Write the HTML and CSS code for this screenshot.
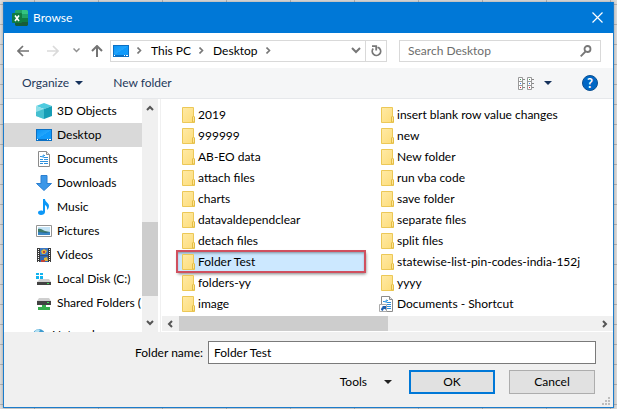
FILE: index.html
```
<!DOCTYPE html>
<html lang="en">
<head>
  <meta charset="UTF-8" />
  <meta name="viewport" content="width=device-width, initial-scale=1.0"/>
  <title>Browse</title>
  <link rel="stylesheet" href="styles.css">
</head>
<body>

  <!-- shared icons -->
  <svg class="defs" aria-hidden="true">
    <linearGradient id="yellow" x2="1" y2="1"><stop stop-color="#ffeaa6"/><stop offset="1" stop-color="#fddc78"/></linearGradient>
    <linearGradient id="sky" x2="1" y2="1"><stop stop-color="#0a93f5"/><stop offset=".5" stop-color="#22a5fc"/><stop offset=".52" stop-color="#109afb"/><stop offset="1" stop-color="#139bfa"/></linearGradient>
    <symbol id="folder" viewBox="0 0 13 16">
      <path d="M.5.5h11v9l1 1v5H.5z" fill="url(#yellow)" stroke="#ecc857"/>
      <path d="M10.500 15v-5l1-1 1 1v5z" fill="#ffe596" stroke="#e3bd45"/>
    </symbol>
    <symbol id="monitor" viewBox="0 0 16 12">
      <path d="M0 0h16v12H0z" fill="#0b70c4"/>
      <path d="M1 1h14v9H1z" fill="url(#sky)"/>
      <path d="M1 10h1v1H1zM11 10h1v1h-1zM13 10h2v1h-2z" fill="#fff"/>
    </symbol>
    <symbol id="doc" viewBox="0 0 12 16">
      <path d="M.5.5h8l3 3v12H.5z" fill="#fff" stroke="#8b8b8b"/>
      <path d="M8.500.5v3h3" fill="#e4e4e4" stroke="#8b8b8b"/>
      <path d="M2 5.500h2M5 4.500h2M6 6.500h4M2 8.500h3M6 8.500h4M2 10.500h8M2 12.500h3M6 12.500h4" stroke="#2d8fdc"/>
      <path d="M3 6l3-3v4z" fill="#57aeea"/>
    </symbol>
  </svg>

  <div class="dialog">
    <header class="titlebar">
      <svg width="16" height="16" viewBox="0 0 16 16">
        <path d="M4 0h6v5H3V1z" fill="#21a366"/><path d="M10 0h5l1 1v4h-6z" fill="#33c481"/>
        <path d="M3 4h7v4H3z" fill="#107c41"/><path d="M10 4h6v4h-6z" fill="#21a366"/>
        <path d="M3 8h7v4H3z" fill="#185c37"/><path d="M10 8h6v4h-6z" fill="#107c41"/>
        <path d="M3 12h13v3l-1 1H4l-1-1z" fill="#185c37"/>
        <rect y="3" width="10" height="10" rx="1" fill="#107c41"/>
        <path d="M3 5.500l4 5.500M7 5.500L3 11" stroke="#fff" stroke-width="1.600"/>
      </svg>
      <h1>Browse</h1>
      <button class="close" aria-label="Close">
        <svg width="11" height="11" viewBox="0 0 11 11"><path d="M.5.5l10 10M10.500.5l-10 10" stroke="#fff" stroke-width="1.200"/></svg>
      </button>
    </header>

    <nav class="navbar">
      <button aria-label="Back"><svg width="12" height="12" viewBox="0 0 12 12"><path d="M12 6H1M6 1L1 6l5 5" fill="none" stroke="#747474" stroke-width="1.700"/></svg></button>
      <button class="forward" aria-label="Forward" disabled><svg width="12" height="12" viewBox="0 0 12 12"><path d="M0 6h11M6 1l5 5-5 5" fill="none" stroke="#dadada" stroke-width="1.700"/></svg></button>
      <button class="recent" aria-label="Recent locations"><svg width="7" height="5" viewBox="0 0 7 5"><path d="M.5.5l3 3 3-3" fill="none" stroke="#909090" stroke-width="1.500"/></svg></button>
      <button class="up" aria-label="Up"><svg width="12" height="12" viewBox="0 0 12 12"><path d="M6 12V1M1 6l5-5 5 5" fill="none" stroke="#747474" stroke-width="2"/></svg></button>

      <div class="address">
        <svg width="16" height="12"><use href="#monitor"/></svg>
        <svg class="sep" width="5" height="7" viewBox="0 0 5 7"><path d="M.5.5l3 3-3 3" fill="none" stroke="#777" stroke-width="1.600"/></svg>
        <a href="#">This PC</a>
        <svg class="sep" width="5" height="7" viewBox="0 0 5 7"><path d="M.5.5l3 3-3 3" fill="none" stroke="#777" stroke-width="1.600"/></svg>
        <a href="#">Desktop</a>
        <svg class="sep" width="5" height="7" viewBox="0 0 5 7"><path d="M.5.5l3 3-3 3" fill="none" stroke="#777" stroke-width="1.600"/></svg>
        <button class="history" aria-label="Previous locations"><svg width="10" height="7" viewBox="0 0 10 7"><path d="M1 1l4 4 4-4" fill="none" stroke="#777" stroke-width="2"/></svg></button>
        <button class="refresh" aria-label="Refresh"><svg width="11" height="12" viewBox="0 0 11 12"><path d="M2.200 3.500A4.200 4.200 0 1 0 8.500 3.300L6.500 2.200" fill="none" stroke="#777" stroke-width="1.800"/><path d="M1 1.200h4.200V5.500" fill="none" stroke="#777" stroke-width="1.800"/></svg></button>
      </div>

      <div class="search">
        <input type="text" placeholder="Search Desktop" aria-label="Search Desktop">
        <svg width="12" height="12" viewBox="0 0 12 12"><circle cx="7.500" cy="4" r="3" fill="none" stroke="#777" stroke-width="1.800"/><path d="M5.500 6.500L.7 11.300" stroke="#777" stroke-width="1.800"/></svg>
      </div>
    </nav>

    <div class="toolbar">
      <button class="organize">Organize <svg width="8" height="4" viewBox="0 0 8 4"><path d="M0 0h8L4 4z" fill="#16325c"/></svg></button>
      <button>New folder</button>
      <button class="view" aria-label="Change your view">
        <svg width="16" height="13" viewBox="0 0 16 13">
          <path d="M.5.5h4v12h-4zM9.500.5h4v12h-4zM.5 4.500h4M.5 8.500h4M9.500 4.500h4M9.500 8.500h4" fill="#fff" stroke="#999"/>
          <path d="M5 2.500h2M5 6.500h2M5 10.500h2M14 2.500h2M14 6.500h2M14 10.500h2" stroke="#888"/>
          <path d="M2 2h1v1H2zM11 2h1v1h-1z" fill="#4a9a62"/><path d="M2 6h1v1H2zM11 6h1v1h-1z" fill="#3d7df0"/><path d="M2 10h1v1H2zM11 10h1v1h-1z" fill="#e0203c"/>
        </svg>
        <svg width="8" height="4" viewBox="0 0 8 4"><path d="M0 0h8L4 4z" fill="#16325c"/></svg>
      </button>
      <button class="help" aria-label="Help">?</button>
    </div>

    <main class="panes">
      <div class="places">
        <ul>
          <li><a href="#"><svg width="16" height="16" viewBox="0 0 16 16"><path d="M8 0l8 3-8 3-8-3z" fill="#4fcbdf"/><path d="M0 3l8 3v10l-8-3z" fill="#8fe0e9"/><path d="M16 3L8 6v10l8-3z" fill="#169db5"/><path d="M0 9l8-3v10l-8-3z" fill="#45bfd0"/></svg>3D Objects</a></li>
          <li class="current"><a href="#"><svg width="16" height="12"><use href="#monitor"/></svg>Desktop</a></li>
          <li><a href="#"><svg width="16" height="16"><use href="#doc" x="0" width="16" height="16"/></svg>Documents</a></li>
          <li><a href="#"><svg width="16" height="16" viewBox="0 0 16 16"><path d="M5 .5h6v8h4.500L8 15.500.5 8.500H5z" fill="#3b97e8" stroke="#2b7fd0"/></svg>Downloads</a></li>
          <li><a href="#"><svg width="16" height="16" viewBox="0 0 16 16"><path d="M7 0h2c0 3 4 4 4 7 0 2-1 3-2 4 .5-3-.5-4-2-5v7c0 2-2 3-4 3s-3-1-3-2.200C2 12 4.500 11 7 12z" fill="#0d98f7"/></svg>Music</a></li>
          <li><a href="#"><svg width="16" height="12" viewBox="0 0 16 12"><path d="M.5.5h15v11H.5z" fill="#fff" stroke="#949494"/><path d="M2 2h12v8H2z" fill="#c4e3f6"/><path d="M2 4c3-1 4 1 7 2l5 1v1H2z" fill="#3e7a69"/><path d="M2 7h12v3H2z" fill="#3a86c4"/><path d="M2 7h8l4 1z" fill="#245a58"/></svg>Pictures</a></li>
          <li><a href="#"><svg width="16" height="16" viewBox="0 0 16 16"><path d="M1 1h14v14H1z" fill="#3a3a3a"/><path d="M4 1h8v7H4z" fill="#3c78c4"/><path d="M4 8.500h8V15H4z" fill="#2f6ab5"/><path d="M5 4l3-2 3 2-2 3H6zM8 11l3-1 1 4H8z" fill="#e0b43a"/><path d="M7 4h2v2H7zM5 13h4v2H5z" fill="#c0433a"/><path d="M2.500 2v13M13.500 2v13" stroke="#fff" stroke-dasharray="1 1"/></svg>Videos</a></li>
          <li><a href="#"><svg width="16" height="16" viewBox="0 0 16 16"><path d="M0 2h3v2H0zM4 2h3v2H4zM0 5h3v3H0zM4 5h3v3H4z" fill="#12b4ef"/><path d="M4 8h9l2 3H1z" fill="#cfcfcf"/><path d="M1 11h14v3H1z" fill="#434343"/><path d="M11 12h2v1h-2z" fill="#3fe05a"/></svg>Local Disk (C:)</a></li>
          <li><a href="#"><svg width="16" height="16" viewBox="0 0 16 16"><path d="M3 3h10l2 3H1z" fill="#cfcfcf"/><path d="M1 6h14v4H1z" fill="#434343"/><path d="M11 7h2v1h-2z" fill="#3fe05a"/><path d="M6 10h4v2h4v3H2v-3h4z" fill="#35ae4c"/></svg>Shared Folders (</a></li>
          <li class="root"><a href="#"><svg width="16" height="16" viewBox="0 0 16 16"><circle cx="8" cy="8" r="6" fill="#3d9bcf"/><path d="M4 4c2-2 4-2 5-1L7 7 3 8z" fill="#b3e0f2"/><path d="M1 9h9v6H1z" fill="#2b7cb8"/></svg>Network</a></li>
        </ul>
        <div class="vscroll">
          <svg width="8" height="6" viewBox="0 0 8 6"><path d="M1 5l3-3 3 3" fill="none" stroke="#555" stroke-width="2"/></svg>
          <div class="thumb"></div>
          <svg width="8" height="6" viewBox="0 0 8 6"><path d="M1 1l3 3 3-3" fill="none" stroke="#555" stroke-width="2"/></svg>
        </div>
      </div>

      <div class="files">
        <ul>
          <li><svg width="13" height="16"><use href="#folder"/></svg>2019</li>
          <li><svg width="13" height="16"><use href="#folder"/></svg>999999</li>
          <li><svg width="13" height="16"><use href="#folder"/></svg>AB-EO data</li>
          <li><svg width="13" height="16"><use href="#folder"/></svg>attach files</li>
          <li><svg width="13" height="16"><use href="#folder"/></svg>charts</li>
          <li><svg width="13" height="16"><use href="#folder"/></svg>datavaldependclear</li>
          <li><svg width="13" height="16"><use href="#folder"/></svg>detach files</li>
          <li class="selected"><svg width="13" height="16"><use href="#folder"/></svg>Folder Test</li>
          <li><svg width="13" height="16"><use href="#folder"/></svg>folders-yy</li>
          <li><svg width="13" height="16"><use href="#folder"/></svg>image</li>
          <li><svg width="13" height="16"><use href="#folder"/></svg>insert blank row value changes</li>
          <li><svg width="13" height="16"><use href="#folder"/></svg>new</li>
          <li><svg width="13" height="16"><use href="#folder"/></svg>New folder</li>
          <li><svg width="13" height="16"><use href="#folder"/></svg>run vba code</li>
          <li><svg width="13" height="16"><use href="#folder"/></svg>save folder</li>
          <li><svg width="13" height="16"><use href="#folder"/></svg>separate files</li>
          <li><svg width="13" height="16"><use href="#folder"/></svg>split files</li>
          <li><svg width="13" height="16"><use href="#folder"/></svg>statewise-list-pin-codes-india-152j</li>
          <li><svg width="13" height="16"><use href="#folder"/></svg>yyyy</li>
          <li><svg class="shortcut" width="13" height="16" viewBox="0 0 13 16"><use href="#doc" width="12" height="16"/><path d="M-1.500 8.500h7v7h-7z" fill="#fff" stroke="#aaa"/><path d="M0 14c0-2 1-3 2-3l-1-1h4v4l-1-1c-1 0-2 0-2 2z" fill="#1d5fae"/></svg>Documents - Shortcut</li>
        </ul>
        <div class="hscroll">
          <svg width="6" height="8" viewBox="0 0 6 8"><path d="M5 1L2 4l3 3" fill="none" stroke="#555" stroke-width="2"/></svg>
          <div class="thumb"></div>
          <svg width="6" height="8" viewBox="0 0 6 8"><path d="M1 1l3 3-3 3" fill="none" stroke="#555" stroke-width="2"/></svg>
        </div>
      </div>
    </main>

    <footer class="footer">
      <div class="name-row">
        <label for="folderName">Folder name:</label>
        <input type="text" id="folderName" value="Folder Test">
      </div>
      <div class="actions">
        <button class="tools">Tools <svg width="8" height="4" viewBox="0 0 8 4"><path d="M0 0h8L4 4z" fill="#222"/></svg></button>
        <button class="btn primary">OK</button>
        <button class="btn">Cancel</button>
      </div>
      <svg class="grip" width="8" height="8" viewBox="0 0 8 8"><path d="M6 0h2v2H6zM3 3h2v2H3zM6 3h2v2H6zM0 6h2v2H0zM3 6h2v2H3zM6 6h2v2H6z" fill="#bdbdbd"/></svg>
    </footer>
  </div>

</body>
</html>
```
FILE: styles.css
```
* {
  box-sizing: border-box;
}

body {
  margin: 0;
  padding: 2px 3px 1px;
  min-height: 100vh;
  display: flex;
  font-family: Lato, 'Open Sans', sans-serif;
  font-size: 12px;
  line-height: 16px;
  color: #000;
  /* worksheet grid behind the dialog */
  background-color: #dcdcdc;
  background-image:
    linear-gradient(#b4b4b4 1px, transparent 1px),
    linear-gradient(90deg, #b4b4b4 1px, transparent 1px);
  background-size: 64px 20px;
  background-position: 34px 4px;
}

ul {
  list-style: none;
  margin: 0;
  padding: 0;
}

a {
  color: inherit;
  text-decoration: none;
}

svg {
  flex: none;
}

button, input {
  font: inherit;
  color: inherit;
}

button {
  display: flex;
  align-items: center;
  padding: 0;
  border: none;
  background: none;
}

.defs {
  position: absolute;
  width: 0;
  height: 0;
}

.dialog {
  flex: 1;
  min-width: 0;
  display: flex;
  flex-direction: column;
  border: 1px solid #1c7ccb;
  border-top: none;
  background: #f0f0f0;
  box-shadow: 0 0 3px rgba(0, 0, 0, 0.3);
}

/* title bar */
.titlebar {
  display: flex;
  align-items: center;
  gap: 5px;
  height: 31px;
  padding: 0 10px 0 8px;
  background: #0078d7;
  color: #fff;
}

.titlebar h1 {
  margin: 0;
  font-size: 12px;
  font-weight: normal;
}

.close {
  margin-left: auto;
}

/* navigation */
.navbar {
  display: flex;
  align-items: center;
  height: 35px;
  padding: 0 12px 0 13px;
  background: #fff;
}

.forward {
  margin-left: 18px;
}

.recent {
  margin-left: 14px;
}

.up {
  margin: 0 7px 0 11px;
}

.address {
  flex: 1;
  display: flex;
  align-items: center;
  height: 22px;
  padding-left: 2px;
  border: 1px solid #d9d9d9;
}

.sep {
  margin: 0 9px 0 8px;
}

.history {
  margin-left: auto;
  padding: 0 4px;
}

.refresh {
  align-self: stretch;
  padding: 0 4px 0 5px;
  border-left: 1px solid #d9d9d9;
}

.search {
  display: flex;
  align-items: center;
  width: 202px;
  height: 22px;
  margin-left: 12px;
  padding: 0 8px;
  border: 1px solid #d9d9d9;
}

.search input {
  flex: 1;
  min-width: 0;
  padding: 0;
  border: none;
  outline: none;
  background: none;
}

.search input::placeholder {
  color: #6d6d6d;
}

/* command bar */
.toolbar {
  display: flex;
  align-items: center;
  gap: 30px;
  height: 31px;
  padding: 0 15px 0 18px;
  background: #f5f6f7;
  border-bottom: 1px solid #e6e8eb;
  color: #1e395b;
}

.organize {
  gap: 6px;
}

.view {
  gap: 10px;
  margin-left: auto;
}

.help {
  justify-content: center;
  width: 16px;
  height: 16px;
  border: 1px solid #0b4f91;
  border-radius: 50%;
  background: #0067c5;
  color: #fff;
  font-size: 13px;
  font-weight: bold;
}

/* panes */
.panes {
  display: flex;
  height: 233px;
  background: #fff;
}

.places {
  display: flex;
  width: 157px;
  border-right: 1px solid #f0f0f0;
  overflow: hidden;
}

.places ul {
  flex: 1;
  min-width: 0;
  overflow: hidden;
}

.places a {
  display: flex;
  align-items: center;
  gap: 5px;
  height: 24px;
  padding-left: 32px;
  white-space: nowrap;
}

.places .current {
  background: #d9d9d9;
}

.places .root {
  margin-top: 8px;
}

.places .root a {
  padding-left: 27px;
}

.vscroll {
  display: flex;
  flex-direction: column;
  align-items: center;
  width: 16px;
  margin-right: 2px;
  padding: 6px 0;
  background: #f0f0f0;
}

.vscroll .thumb {
  width: 100%;
  height: 74px;
  margin: auto 0 24px;
  background: #cdcdcd;
}

.files {
  flex: 1;
  min-width: 0;
  display: flex;
  flex-direction: column;
  justify-content: space-between;
  padding: 5px 0 0 1px;
}

.files ul {
  display: grid;
  grid-template-rows: repeat(10, 21px);
  grid-auto-flow: column;
  grid-auto-columns: 188px;
  column-gap: 11px;
  padding-left: 15px;
}

.files li {
  display: flex;
  align-items: center;
  gap: 3px;
  padding-left: 5px;
  white-space: nowrap;
}

.files .selected {
  background: #cce8ff;
  outline: 2px solid #d0505f;
  outline-offset: -1px;
  box-shadow: 1px 2px 3px rgba(0, 0, 0, 0.5), inset 0 2px 3px rgba(0, 0, 0, 0.4);
}

.shortcut {
  overflow: visible;
}

.hscroll {
  display: flex;
  align-items: center;
  height: 15px;
  padding: 0 5px;
  margin-bottom: 1px;
  background: #f0f0f0;
}

.hscroll .thumb {
  width: 209px;
  height: 100%;
  margin: 0 auto 0 6px;
  background: #cdcdcd;
}

/* footer */
.footer {
  position: relative;
  flex: 1;
  padding: 9px 17px 13px;
}

.name-row {
  display: flex;
  align-items: center;
  gap: 5px;
}

.name-row label {
  width: 199px;
  margin-left: -17px;
  text-align: right;
}

.name-row input {
  flex: 1;
  min-width: 0;
  height: 23px;
  padding: 0 5px;
  border: 1px solid #7a7a7a;
  background: #fff;
}

.actions {
  display: flex;
  justify-content: flex-end;
  gap: 14px;
  margin-top: 6px;
  padding-right: 1px;
}

.tools {
  gap: 17px;
  margin-right: 3px;
}

.btn {
  justify-content: center;
  width: 86px;
  height: 24px;
  border: 1px solid #adadad;
  background: #e1e1e1;
}

.btn.primary {
  border: 2px solid #0078d7;
}

.grip {
  position: absolute;
  right: 3px;
  bottom: 2px;
}
```
